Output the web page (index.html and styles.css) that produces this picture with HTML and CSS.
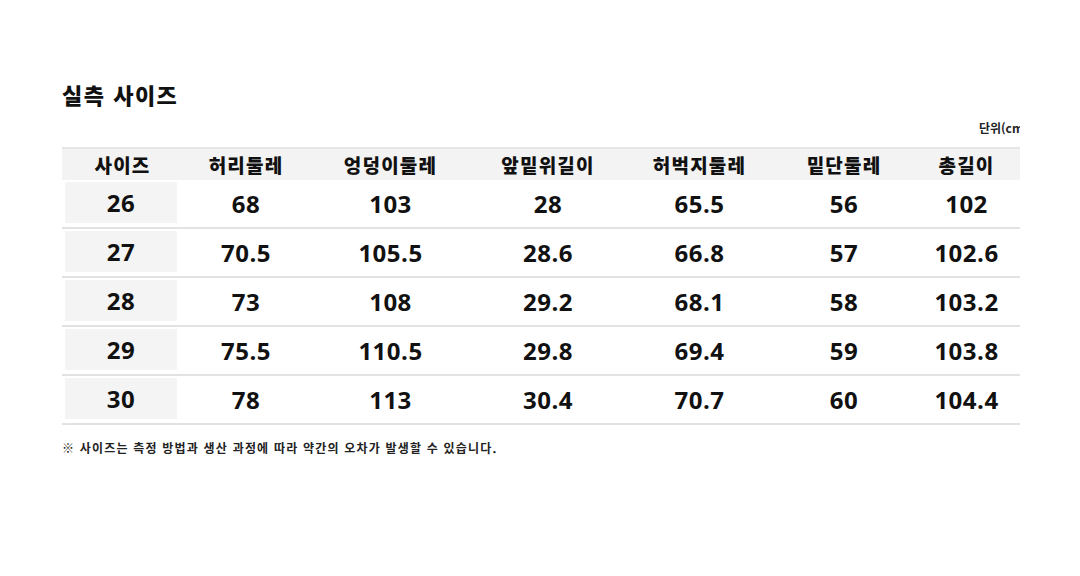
FILE: index.html
```html
<!DOCTYPE html>
<html lang="ko">
<head>
<meta charset="utf-8">
<link rel="stylesheet" href="styles.css">
</head>
<body>
<div class="page">
  <h1 class="title">실측 사이즈</h1>
  <div class="unit"><span>단위(cm)</span></div>
  <div class="table">
    <div class="row head">
      <div class="c c1">사이즈</div><div class="c c2">허리둘레</div><div class="c c3">엉덩이둘레</div><div class="c c4">앞밑위길이</div><div class="c c5">허벅지둘레</div><div class="c c6">밑단둘레</div><div class="c c7">총길이</div>
    </div>
    <div class="row">
      <div class="c c1 size">26</div><div class="c c2">68</div><div class="c c3">103</div><div class="c c4">28</div><div class="c c5">65.5</div><div class="c c6">56</div><div class="c c7">102</div>
    </div>
    <div class="row">
      <div class="c c1 size">27</div><div class="c c2">70.5</div><div class="c c3">105.5</div><div class="c c4">28.6</div><div class="c c5">66.8</div><div class="c c6">57</div><div class="c c7">102.6</div>
    </div>
    <div class="row">
      <div class="c c1 size">28</div><div class="c c2">73</div><div class="c c3">108</div><div class="c c4">29.2</div><div class="c c5">68.1</div><div class="c c6">58</div><div class="c c7">103.2</div>
    </div>
    <div class="row">
      <div class="c c1 size">29</div><div class="c c2">75.5</div><div class="c c3">110.5</div><div class="c c4">29.8</div><div class="c c5">69.4</div><div class="c c6">59</div><div class="c c7">103.8</div>
    </div>
    <div class="row">
      <div class="c c1 size">30</div><div class="c c2">78</div><div class="c c3">113</div><div class="c c4">30.4</div><div class="c c5">70.7</div><div class="c c6">60</div><div class="c c7">104.4</div>
    </div>
  </div>
  <p class="note">※ 사이즈는 측정 방법과 생산 과정에 따라 약간의 오차가 발생할 수 있습니다.</p>
</div>
</body>
</html>
```
FILE: styles.css
```css
html, body {
  margin: 0;
  padding: 0;
  background: #ffffff;
}
body {
  font-family: "Noto Sans CJK KR", "Open Sans", sans-serif;
  color: #111111;
}
.page {
  width: 958px;
  padding: 78px 0 0 62px;
}
.title {
  margin: 0;
  font-size: 22px;
  font-weight: 900;
  letter-spacing: 1.5px;
  line-height: 32px;
  height: 32px;
}
.unit {
  display: flex;
  justify-content: flex-end;
  overflow: hidden;
  margin-top: 9px;
  height: 18px;
  font-size: 12px;
  line-height: 18px;
  font-weight: 700;
  color: #222;
}
.unit span {
  margin-right: -8px;
  white-space: nowrap;
}
.table {
  margin-top: 10px;
  border-top: 2px solid #e6e6e6;
}
.row {
  display: flex;
  height: 49px;
  border-bottom: 2px solid #e2e2e2;
  box-sizing: border-box;
  align-items: stretch;
}
.row.head {
  height: 31px;
  border-bottom: none;
  background: #f3f3f3;
}
.c {
  display: flex;
  align-items: center;
  justify-content: center;
  font-family: "Open Sans", "Noto Sans CJK KR", sans-serif;
  font-weight: 700;
  font-size: 24px;
  letter-spacing: 0.5px;
  color: #111;
}
.head .c {
  font-family: "Noto Sans CJK KR", sans-serif;
  font-weight: 900;
  font-size: 19px;
  letter-spacing: 1.2px;
}
.c1 { width: 121px; }
.c2 { width: 126px; }
.c3 { width: 163px; }
.c4 { width: 152px; }
.c5 { width: 151px; }
.c6 { width: 138px; }
.c7 { width: 107px; }
.size {
  background: #f4f4f4;
  margin: 2px 6px 4px 3px;
  width: 112px;
}
.note {
  margin: 14px 0 0 0;
  font-size: 12px;
  font-weight: 700;
  color: #222;
  letter-spacing: 1.2px;
}
```
